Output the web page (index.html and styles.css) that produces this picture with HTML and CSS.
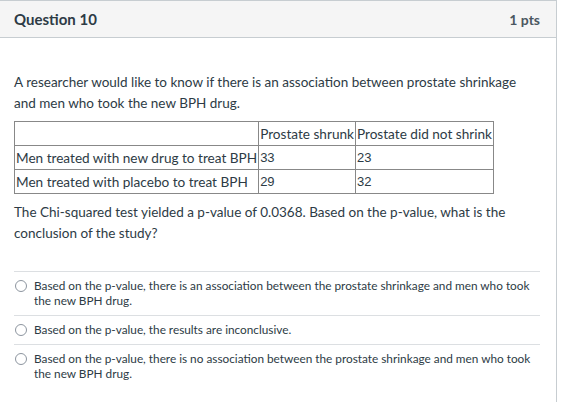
FILE: index.html
```html
<!DOCTYPE html>
<html>
<head>
<meta charset="utf-8">
<link rel="stylesheet" href="styles.css">
</head>
<body>
<div class="card">
  <div class="header">
    <span class="title">Question 10</span>
    <span class="pts">1 pts</span>
  </div>
  <div class="content">
    <p class="text first">A researcher would like to know if there is an association between prostate shrinkage and men who took the new BPH drug.</p>
    <table class="data">
      <tr><td class="c1"></td><td class="c2">Prostate shrunk</td><td class="c3">Prostate did not shrink</td></tr>
      <tr><td>Men treated with new drug to treat BPH</td><td class="num">33</td><td class="num">23</td></tr>
      <tr><td>Men treated with placebo to treat BPH</td><td class="num">29</td><td class="num">32</td></tr>
    </table>
    <p class="text second">The Chi-squared test yielded a p-value of 0.0368. Based on the p-value, what is the conclusion of the study?</p>
    <div class="answers">
      <div class="answer">
        <span class="radio"></span>
        <span class="label">Based on the p-value, there is an association between the prostate shrinkage and men who took the new BPH drug.</span>
      </div>
      <div class="answer">
        <span class="radio"></span>
        <span class="label">Based on the p-value, the results are inconclusive.</span>
      </div>
      <div class="answer">
        <span class="radio"></span>
        <span class="label">Based on the p-value, there is no association between the prostate shrinkage and men who took the new BPH drug.</span>
      </div>
    </div>
  </div>
</div>
</body>
</html>
```

FILE: styles.css
```css
html, body {
  margin: 0;
  padding: 0;
  background: #ffffff;
}
body {
  font-family: Lato, "Liberation Sans", sans-serif;
  color: #2d3b45;
}
.card {
  width: 557px;
  height: 420px;
  border-top: 1px solid #c7cdd1;
  border-right: 1px solid #c7cdd1;
  box-sizing: border-box;
}
.header {
  height: 37px;
  box-sizing: border-box;
  background: #f5f5f5;
  border-bottom: 1px solid #c7cdd1;
  display: flex;
  align-items: center;
  justify-content: space-between;
  padding: 0 16px 0 14px;
}
.title {
  font-weight: bold;
  font-size: 15px;
}
.pts {
  font-weight: bold;
  font-size: 14px;
  color: #4a5760;
}
.content {
  padding: 0 15px 0 14px;
}
.text {
  font-size: 13.5px;
  line-height: 21px;
  margin: 0;
}
.first {
  padding-top: 34px;
}
.data {
  border-collapse: collapse;
  margin-top: 7px;
  font-size: 13.6px;
}
.data td {
  border: 1px solid #888888;
  padding: 0 1px;
  height: 23px;
  line-height: 20px;
  white-space: nowrap;
}
.data .num {
  font-family: "Liberation Sans", Arial, sans-serif;
  font-size: 13px;
}
.second {
  margin-top: 8px;
}
.answers {
  margin-top: 27px;
  width: 526px;
}
.answer {
  display: flex;
  align-items: flex-start;
  border-top: 1px solid #dcdfe2;
  padding: 6px 0 7px 0;
  font-size: 11.8px;
  line-height: 15px;
}
.radio {
  flex: none;
  width: 10px;
  height: 10px;
  border: 1px solid #8d959f;
  border-radius: 50%;
  margin: 2px 7px 0 1px;
}
.label {
  flex: 1;
}
```
